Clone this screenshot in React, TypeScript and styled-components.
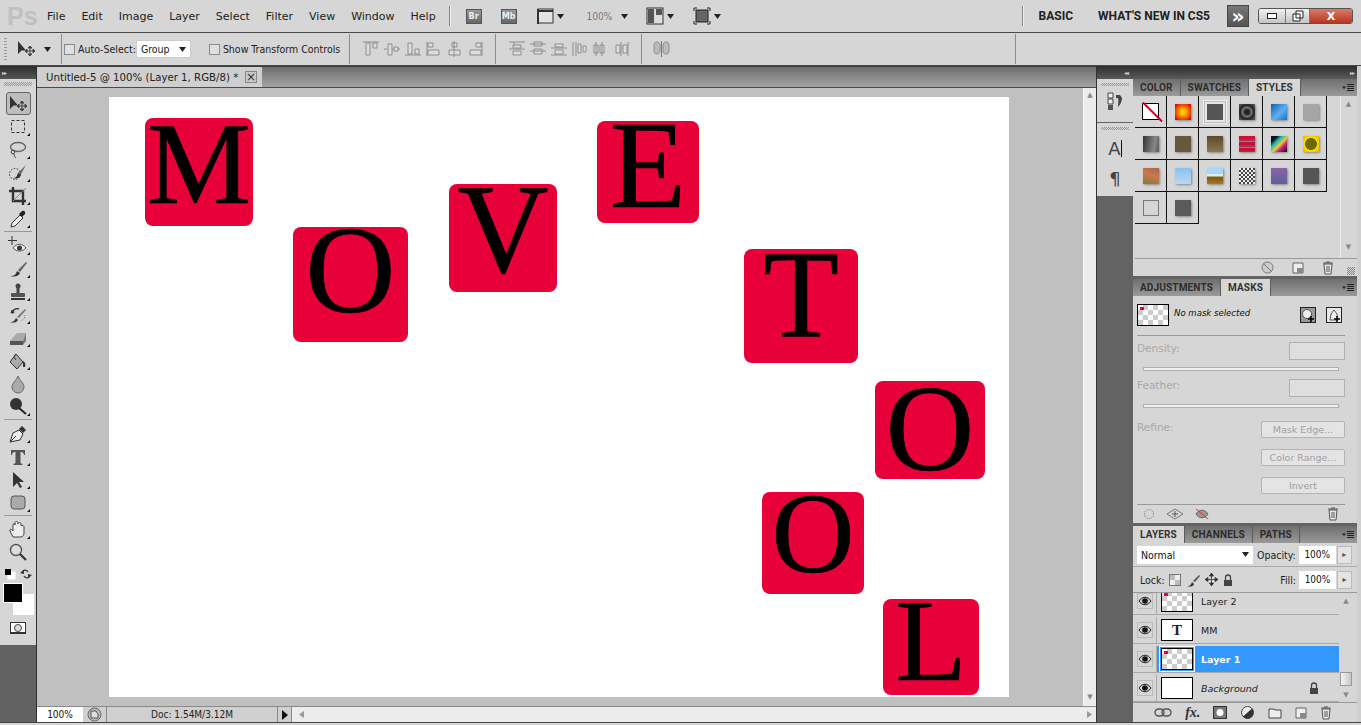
import { ReactNode } from 'react'
import styled, { createGlobalStyle } from 'styled-components'

const GlobalStyle = createGlobalStyle`
  html, body {
    margin: 0;
    height: 100%;
    overflow: hidden;
    background: #d6d6d6;
  }
  * {
    box-sizing: border-box;
  }
`

const ui = '"DejaVu Sans", "Noto Sans", sans-serif'
const narrow = '"DejaVu Sans Condensed", "Noto Sans", sans-serif'
const cond = 'Roboto, "Liberation Sans", sans-serif'

const MENU = ['File', 'Edit', 'Image', 'Layer', 'Select', 'Filter', 'View', 'Window', 'Help']

const TILES = [
  { ch: 'M', x: 36, y: 21, w: 108, h: 108, size: 117, lift: 18 },
  { ch: 'O', x: 184, y: 130, w: 115, h: 115, size: 125, lift: 29 },
  { ch: 'V', x: 340, y: 87, w: 108, h: 108, size: 126, lift: 17 },
  { ch: 'E', x: 488, y: 24, w: 102, h: 102, size: 125, lift: 13 },
  { ch: 'T', x: 635, y: 152, w: 114, h: 114, size: 124, lift: 20 },
  { ch: 'O', x: 766, y: 284, w: 110, h: 98, size: 123, lift: 3 },
  { ch: 'O', x: 653, y: 395, w: 102, h: 102, size: 115, lift: 20 },
  { ch: 'L', x: 774, y: 502, w: 96, h: 96, size: 117, lift: 13 },
]

const STYLES = [
  'none',
  'radial-gradient(circle, #ffe000 10%, #ff6a00 50%, #d01000 90%)',
  '#555',
  'radial-gradient(circle, #222 20%, #777 40%, #222 60%, #555 90%)',
  'linear-gradient(135deg, #0f5fb0, #5fb0ef 55%, #1a6fc8)',
  '#a5a5a5',
  'linear-gradient(100deg, #333, #888 70%, #555)',
  '#66583a',
  'linear-gradient(#5a4a28, #8a7a50)',
  'repeating-linear-gradient(#d0102a 0 3px, #8a3a70 3px 5px, #d8701a 5px 6px)',
  'linear-gradient(135deg, #111 20%, #19b5c8 35%, #e8d030 55%, #d02080 70%, #111)',
  'radial-gradient(circle, #6e6a00 50%, #ffe000 55%, #d8b000)',
  'linear-gradient(20deg, #8a7a30, #c87850 55%, #a86848)',
  'linear-gradient(#8cc0ee, #b8d8f8)',
  'linear-gradient(#a8d8f8 35%, #fff 45%, #7a5a10 60%, #b07a10)',
  'repeating-conic-gradient(#444 0 25%, #eee 0 50%) 0 0 / 4px 4px',
  'linear-gradient(#9060a8, #5a60a0)',
  '#555',
  'transparent',
  '#5a5a5a',
]

const Ico = styled.svg`
  display: block;
  flex: none;
`

function I({ s = 20, w, h, children }: { s?: number; w?: number; h?: number; children: ReactNode }) {
  return (
    <Ico width={w ?? s} height={h ?? s} viewBox={`0 0 ${w ?? s} ${h ?? s}`}>
      {children}
    </Ico>
  )
}

const Caret = () => (
  <I w={7} h={5}>
    <path d="M0 0h7L3.5 5z" fill="#222" />
  </I>
)

const MoveIcon = () => (
  <I s={20}>
    <path d="M2 2v13l3.5-3.5H10z" fill="#333" />
    <path d="M14 7v10M9 12h10M14 7l-2 2h4zM14 17l-2-2h4zM9 12l2-2v4zM19 12l-2-2v4z" stroke="#444" fill="#444" strokeWidth="1" />
  </I>
)

const TOOLS: { key: string; icon: ReactNode; sep?: boolean; corner?: boolean }[] = [
  { key: 'move', icon: <MoveIcon /> },
  { key: 'marquee', corner: true, icon: <I><rect x="3.5" y="3.5" width="13" height="12" fill="none" stroke="#333" strokeDasharray="3 2" /></I> },
  { key: 'lasso', corner: true, icon: <I><ellipse cx="10" cy="7" rx="7.5" ry="4.5" fill="none" stroke="#666" strokeWidth="1.400" /><circle cx="5" cy="12" r="1.800" fill="none" stroke="#444" /><path d="M6 14c0 2 1 3 2 4" stroke="#444" fill="none" /></I> },
  { key: 'quick', corner: true, icon: <I><circle cx="7" cy="11" r="5.500" fill="none" stroke="#333" strokeDasharray="1.500 1.500" /><path d="M18 2l-7 7-1 1 1 2 2-1z" fill="#666" /><path d="M5 15c3 0 4-2 5-5l3 2c-2 4-5 4-8 3z" fill="#333" /></I> },
  { key: 'crop', corner: true, icon: <I><path d="M5 1v14h13M1 5h14v14" fill="none" stroke="#333" strokeWidth="2.400" /><path d="M5 15L18 2" stroke="#888" /></I> },
  { key: 'eye', sep: true, corner: true, icon: <I><path d="M3 18l1-4 8-8 3 3-8 8z" fill="#eee" stroke="#333" /><path d="M11 5l3-3c2-1 4 1 3 3l-3 3z" fill="#222" /></I> },
  { key: 'heal', corner: true, icon: <I><path d="M4 0v9M0 4.500h9" stroke="#333" /><path d="M5 12c4-5 9-5 13 0-4 4-9 4-13 0z" fill="#eee" stroke="#555" /><circle cx="11.500" cy="12" r="2.500" fill="#333" /></I> },
  { key: 'brush', corner: true, icon: <I><path d="M2 17c5 0 6-2 7-5l3 2c-2 4-6 4-10 3z" fill="#333" /><path d="M10 11l8-8 1 1-7 9z" fill="#666" /></I> },
  { key: 'stamp', corner: true, icon: <I><circle cx="10" cy="4" r="2.500" fill="#444" /><path d="M8.500 6h3v5h-3z" fill="#444" /><rect x="3" y="11" width="14" height="4" rx="1" fill="#555" /><rect x="3" y="16" width="14" height="2" fill="#333" /></I> },
  { key: 'history', corner: true, icon: <I><path d="M2 17c4 0 5-2 6-4l2 2c-2 3-5 3-8 2z" fill="#333" /><path d="M9 12l8-8 1 1-7 8z" fill="#777" /><path d="M3 8c2-4 6-5 8-4" stroke="#333" strokeWidth="1.400" fill="none" /><path d="M3 5l1 4 3-2z" fill="#333" /><path d="M17 10c0 3-2 5-4 6" stroke="#777" strokeDasharray="1 1" fill="none" /></I> },
  { key: 'eraser', corner: true, icon: <I><path d="M2 13L9 5h9l-3 9H2z" fill="#aaa" /><path d="M2 13h13v4H2z" fill="#555" /><path d="M15 17l3-4v-8l-3 8z" fill="#777" /></I> },
  { key: 'bucket', corner: true, icon: <I><path d="M8 3L2 11l7 7 6-7z" fill="#aaa" stroke="#333" /><path d="M8 3c-2 1-2 4 0 6" stroke="#333" fill="none" /><path d="M15 10c2 1 3 3 2 6h-2z" fill="#333" /></I> },
  { key: 'drop', icon: <I><path d="M10 2c2 5 6 7 6 11a6 6 0 0 1-12 0c0-4 4-6 6-11z" fill="#aaa" stroke="#666" /></I> },
  { key: 'burn', sep: true, corner: true, icon: <I><circle cx="8" cy="7" r="6" fill="#333" /><path d="M11 11l7 6" stroke="#222" strokeWidth="2" /></I> },
  { key: 'pen', corner: true, icon: <I><path d="M2 18l3-9 6-3 4 4-3 6z" fill="#eee" stroke="#333" /><path d="M11 5l3-3 4 4-3 3z" fill="#333" /><path d="M2 18l6-6" stroke="#333" /></I> },
  { key: 'text', corner: true, icon: <I><path d="M3 3h14v5h-.8c-1-3-2-3-3.700-3v11l2 1v1H5.500v-1l2-1V5c-1.700 0-2.700 0-3.700 3H3z" fill="#555" /></I> },
  { key: 'path', corner: true, icon: <I><path d="M5 2v15l4-4 3 5 2-1-3-5h5z" fill="#333" /></I> },
  { key: 'shape', sep: true, corner: true, icon: <I><rect x="3" y="3" width="14" height="13" rx="3" fill="#aaa" stroke="#555" /></I> },
  { key: 'hand', corner: true, icon: <I><path d="M5 17L2 11c-1-2 1-2 2-1l1 1V5c0-2 2-2 2 0V3c0-2 3-2 3 0v1c0-2 3-2 3 0v2c0-1 3-1 3 1v6c0 2-1 4-3 4z" fill="#eee" stroke="#444" /></I> },
  { key: 'zoom', icon: <I><circle cx="8" cy="7" r="5.500" fill="#ddd" stroke="#555" strokeWidth="1.400" /><path d="M12 11l6 6" stroke="#333" strokeWidth="2.200" /></I> },
]

const ALIGN_A = [
  'M1 1h16M4 2h4v12H4zM11 2h4v5h-4z',
  'M1 8h3M5 3h4v11H5zM9 8h2M11 6h4v4h-4zM15 8h2',
  'M1 14h16M4 2h4v11H4zM11 8h4v5h-4z',
  'M2 1v14M3 2h5v4H3zM3 9h11v5H3z',
  'M8 0v16M6 2h5v4H6zM3 9h11v5H3z',
  'M15 1v14M9 2h5v4H9zM3 9h11v5H3z',
]
const ALIGN_B = [
  'M1 1h16M6 1v4M1 8h16M5 4h8v3H5zM5 10h8v4H5z',
  'M1 3h16M1 10h16M5 1h8v4H5zM5 8h8v5H5z',
  'M1 7h16M1 14h16M5 3h8v3H5zM5 9h8v4H5z',
  'M2 1v14M5 1v14M7 3h3v9H7zM12 5h3v6h-3z',
  'M4 1v14M10 1v14M2 4h4v8H2zM8 4h4v8H8z',
  'M8 1v14M15 1v14M3 4h4v8H3zM10 4h4v8h-4z',
]

const AlignIcon = ({ d }: { d: string }) => (
  <I w={18} h={16}>
    <path d={d} fill="#ddd" stroke="#8c8c8c" />
  </I>
)

const TrashIcon = () => (
  <I w={12} h={14}>
    <path d="M2 3h8l-1 10H3zM1 2h10M4 1h4" fill="#e8e8e8" stroke="#555" />
    <path d="M5 5v6M7 5v6" stroke="#555" />
  </I>
)

const NewIcon = () => (
  <I w={12} h={12}>
    <path d="M1 1h10v10H1z" fill="#eee" stroke="#666" />
    <path d="M5 6h6v5H5z" fill="#888" />
  </I>
)

const FolderIcon = () => (
  <I w={14} h={12}>
    <path d="M1 2h5l1 1h6v8H1z" fill="#eee" stroke="#444" />
  </I>
)

const EyeIcon = () => (
  <I w={14} h={10}>
    <path d="M1 5c3-5 9-5 12 0-3 5-9 5-12 0z" fill="#ccc" stroke="#222" />
    <circle cx="7" cy="5" r="2.800" fill="#111" />
  </I>
)

const LockIcon = () => (
  <I w={10} h={12}>
    <path d="M2.500 6V3.500a2.500 2.500 0 0 1 5 0V6" fill="none" stroke="#444" strokeWidth="1.300" />
    <rect x="1" y="6" width="8" height="6" fill="#444" />
  </I>
)

const MenuGlyph = () => (
  <I w={12} h={8}>
    <path d="M0 2.500h4L2 5z" fill="#222" />
    <path d="M5 .5h7M5 2.500h7M5 4.500h7M5 6.500h7" stroke="#222" />
  </I>
)

export default function App() {
  return (
    <>
      <GlobalStyle />
      <Page>
        <MenuBar>
          <Logo>Ps</Logo>
          {MENU.map((m) => (
            <MenuItem key={m}>{m}</MenuItem>
          ))}
          <VRule $left={5} />
          <AppBtn $left={15}>Br</AppBtn>
          <AppBtn $left={19}>Mb</AppBtn>
          <BarIcon $left={19}>
            <I w={18} h={18}>
              <rect x="2" y="2" width="15" height="14" fill="#e4e4e4" stroke="#333" />
              <path d="M1 3h16v2H1zM1 2h2v15H1z" fill="#333" />
            </I>
            <Caret />
          </BarIcon>
          <ZoomLabel>100%</ZoomLabel>
          <Caret />
          <BarIcon $left={18}>
            <I w={18} h={18}>
              <rect x="1" y="1" width="16" height="16" fill="#ddd" stroke="#333" />
              <path d="M2 2h6v14H2zM10 2h6v6h-6z" fill="#555" />
            </I>
            <Caret />
          </BarIcon>
          <BarIcon $left={19}>
            <I w={18} h={18}>
              <rect x="3" y="3" width="12" height="12" fill="#666" stroke="#222" />
              <path d="M1 4V1h3M14 1h3v3M17 14v3h-3M4 17H1v-3" fill="none" stroke="#222" />
            </I>
            <Caret />
          </BarIcon>
          <Spring />
          <VRule $left={0} />
          <Workspace $left={15}>BASIC</Workspace>
          <Workspace $left={25}>WHAT'S NEW IN CS5</Workspace>
          <MoreBtn>»</MoreBtn>
          <WinControls>
            <WinBtn $w={27}>
              <I w={10} h={6}>
                <rect x="0.500" y="0.500" width="9" height="5" fill="#fff" stroke="#222" />
              </I>
            </WinBtn>
            <WinBtn $w={24}>
              <I w={12} h={12}>
                <path d="M4 1h7v7H4zM1 4h7v7H1z" fill="#fff" stroke="#222" />
              </I>
            </WinBtn>
            <CloseBtn>X</CloseBtn>
          </WinControls>
        </MenuBar>

        <OptionsBar>
          <Grip />
          <OptMove>
            <MoveIcon />
            <Caret />
          </OptMove>
          <OptRule $left={10} />
          <Check $left={2} />
          <OptLabel $left={3}>Auto-Select:</OptLabel>
          <GroupSelect>
            Group
            <Caret />
          </GroupSelect>
          <Check $left={18} />
          <OptLabel $left={3}>Show Transform Controls</OptLabel>
          <OptRule $left={9} />
          <AlignRow $left={12}>
            {ALIGN_A.map((d) => (
              <AlignIcon key={d} d={d} />
            ))}
          </AlignRow>
          <OptRule $left={10} />
          <AlignRow $left={12}>
            {ALIGN_B.map((d) => (
              <AlignIcon key={d} d={d} />
            ))}
          </AlignRow>
          <OptRule $left={10} />
          <AlignRow $left={11}>
            <I w={17} h={16}>
              <path d="M1 4c0-4 6-4 6 0v6c0 4-6 4-6 0zM10 4c0-4 6-4 6 0v6c0 4-6 4-6 0z" fill="#bbb" stroke="#8c8c8c" />
              <path d="M8.500 0v16" stroke="#777" />
            </I>
          </AlignRow>
          <OptRule $left={345} />
        </OptionsBar>

        <Main>
          <ToolColumn>
            <DarkStrip>
              <ArrowMark>▸▸</ArrowMark>
            </DarkStrip>
            <ToolPanel>
              <ToolGrip />
              {TOOLS.map((t, i) => (
                <ToolGroup key={t.key}>
                  <ToolBtn $active={i === 0}>
                    {t.icon}
                    {t.corner && <Corner />}
                  </ToolBtn>
                  {t.sep && <ToolRule />}
                </ToolGroup>
              ))}
              <SwapRow>
                <I w={12} h={12}>
                  <rect x="4" y="4" width="7" height="7" fill="#fff" stroke="#fff" />
                  <rect x="1" y="1" width="6" height="6" fill="#000" />
                </I>
                <I w={12} h={12}>
                  <path d="M2 4c2-3 5-2 6 0M10 8c-2 3-5 2-6 0" fill="none" stroke="#333" strokeWidth="1.300" />
                  <path d="M0 5l4-3v4zM12 7L8 10V6z" fill="#333" />
                </I>
              </SwapRow>
              <Colors>
                <BackColor />
                <ForeColor />
              </Colors>
              <QuickMask>
                <QuickDot />
              </QuickMask>
            </ToolPanel>
          </ToolColumn>

          <DocColumn>
            <TabStrip>
              <DocTab>
                Untitled-5 @ 100% (Layer 1, RGB/8) *
                <TabClose>×</TabClose>
              </DocTab>
            </TabStrip>
            <DocMiddle>
              <Pasteboard>
                <Canvas>
                  {TILES.map((t) => (
                    <Tile key={t.x} $x={t.x} $y={t.y} $w={t.w} $h={t.h} $size={t.size} $lift={t.lift}>
                      {t.ch}
                    </Tile>
                  ))}
                </Canvas>
              </Pasteboard>
              <VScroll>
                <ScrollArrow>▲</ScrollArrow>
                <ScrollArrow>▼</ScrollArrow>
              </VScroll>
            </DocMiddle>
            <StatusBar>
              <ZoomBox>100%</ZoomBox>
              <StatusIcon>
                <I w={15} h={15}>
                  <circle cx="7.500" cy="7.500" r="6.500" fill="#bbb" stroke="#666" />
                  <path d="M4 4h5l2 3v4H4z" fill="#ddd" stroke="#555" />
                </I>
              </StatusIcon>
              <DocInfo>Doc: 1.54M/3.12M</DocInfo>
              <StatusArrow>
                <I w={6} h={10}>
                  <path d="M0 0l6 5-6 5z" fill="#111" />
                </I>
              </StatusArrow>
              <HScroll>
                <I w={5} h={7}>
                  <path d="M5 0v7L0 3.500z" fill="#999" />
                </I>
                <I w={5} h={7}>
                  <path d="M0 0v7l5-3.500z" fill="#999" />
                </I>
              </HScroll>
            </StatusBar>
          </DocColumn>

          <DockArea>
            <DockHeader>
              <ArrowMark>◂◂</ArrowMark>
              <ArrowMark>▸▸</ArrowMark>
            </DockHeader>
            <DockBody>
              <IconDock>
                <IconBox $h={43}>
                  <DockGrip />
                  <I w={16} h={18}>
                    <path d="M1 1h5v5H1zM1 7h5v5H1z" fill="#eee" stroke="#444" />
                    <path d="M1 13h5v5H1z" fill="#555" />
                    <path d="M9 3h4l2 3c0 4-2 7-4 9 0-3 1-6 0-9H9z" fill="#444" />
                  </I>
                </IconBox>
                <IconBox $h={73}>
                  <DockGrip />
                  <DockGlyph>
                    A<Cursor />
                  </DockGlyph>
                  <DockGlyph>¶</DockGlyph>
                </IconBox>
              </IconDock>

              <PanelColumn>
                <Panel $h={197}>
                  <Tabs>
                    <Tab>COLOR</Tab>
                    <Tab>SWATCHES</Tab>
                    <Tab $active>STYLES</Tab>
                    <PanelMenu>
                      <MenuGlyph />
                    </PanelMenu>
                  </Tabs>
                  <StylesBody>
                    <StyleGrid>
                      {STYLES.map((bg, i) => (
                        <StyleCell key={i}>
                          {i === 0 ? (
                            <NoStyle />
                          ) : (
                            <StyleSwatch $bg={bg} $outlined={i === 18} $glow={i === 2} />
                          )}
                        </StyleCell>
                      ))}
                    </StyleGrid>
                    <PanelScroll>
                      <ScrollArrow>▲</ScrollArrow>
                      <ScrollArrow>▼</ScrollArrow>
                    </PanelScroll>
                  </StylesBody>
                  <StylesFooter>
                    <I w={13} h={13}>
                      <circle cx="6.500" cy="6.500" r="5.500" fill="#ccc" stroke="#777" />
                      <path d="M2.500 2.500l8 8" stroke="#777" />
                    </I>
                    <NewIcon />
                    <TrashIcon />
                    <ResizeDots />
                  </StylesFooter>
                </Panel>

                <Panel $h={244}>
                  <Tabs>
                    <Tab>ADJUSTMENTS</Tab>
                    <Tab $active>MASKS</Tab>
                    <PanelMenu>
                      <MenuGlyph />
                    </PanelMenu>
                  </Tabs>
                  <MasksBody>
                    <MaskHead>
                      <Thumb $w={32} $h={22} $checker>
                        <RedSpot />
                      </Thumb>
                      <MaskTitle>No mask selected</MaskTitle>
                      <MaskBtn $dark>
                        <I w={14} h={14}>
                          <circle cx="6" cy="6" r="4.500" fill="#eee" stroke="#555" />
                          <path d="M10 8v6M7 11h6" stroke="#000" strokeWidth="1.500" />
                        </I>
                      </MaskBtn>
                      <MaskBtn>
                        <I w={14} h={14}>
                          <path d="M3 12l1-6 3-4 3 4 1 6z" fill="#eee" stroke="#555" />
                          <path d="M10 8v6M7 11h6" stroke="#000" strokeWidth="1.500" />
                        </I>
                      </MaskBtn>
                    </MaskHead>
                    <FieldRow $top={6}>
                      <Dim>Density:</Dim>
                      <DimInput />
                    </FieldRow>
                    <DimSlider />
                    <FieldRow $top={8}>
                      <Dim>Feather:</Dim>
                      <DimInput />
                    </FieldRow>
                    <DimSlider />
                    <RefineBlock>
                      <Dim>Refine:</Dim>
                      <RefineButtons>
                        <DimButton>Mask Edge...</DimButton>
                        <DimButton>Color Range...</DimButton>
                        <DimButton>Invert</DimButton>
                      </RefineButtons>
                    </RefineBlock>
                    <MasksFooter>
                      <I w={12} h={12}>
                        <circle cx="6" cy="6" r="4.500" fill="none" stroke="#777" strokeDasharray="1 1" />
                      </I>
                      <I w={18} h={12}>
                        <path d="M9 1l8 5-8 5-8-5z" fill="none" stroke="#777" />
                        <path d="M9 3v6M6 6h6" stroke="#555" />
                      </I>
                      <I w={14} h={12}>
                        <path d="M1 6c3-5 9-5 12 0-3 5-9 5-12 0z" fill="#999" stroke="#666" />
                        <path d="M1 1l12 10" stroke="#d33" />
                      </I>
                      <Spring />
                      <TrashIcon />
                    </MasksFooter>
                  </MasksBody>
                </Panel>

                <Panel $h={196}>
                  <Tabs>
                    <Tab $active>LAYERS</Tab>
                    <Tab>CHANNELS</Tab>
                    <Tab>PATHS</Tab>
                    <PanelMenu>
                      <MenuGlyph />
                    </PanelMenu>
                  </Tabs>
                  <BlendRow>
                    <BlendSelect>
                      Normal
                      <Caret />
                    </BlendSelect>
                    <LayerLabel>Opacity:</LayerLabel>
                    <Percent>100%</Percent>
                    <Stepper>▸</Stepper>
                  </BlendRow>
                  <LockRow>
                    <LayerLabel>Lock:</LayerLabel>
                    <LockIcons>
                      <I w={12} h={12}>
                        <rect x="0.500" y="0.500" width="11" height="11" fill="#eee" stroke="#777" />
                        <path d="M1 1h5v5H1zM6 6h5v5H6z" fill="#bbb" />
                      </I>
                      <I w={14} h={14}>
                        <path d="M1 13c4 0 4-2 5-4l2 2c-1 3-4 3-7 2z" fill="#333" />
                        <path d="M7 8l6-6 1 1-5 6z" fill="#555" />
                      </I>
                      <I w={13} h={13}>
                        <path d="M6.500 0v13M0 6.500h13M6.500 0L4.500 3h4zM6.500 13l-2-3h4zM0 6.500l3-2v4zM13 6.500l-3-2v4z" stroke="#333" fill="#333" strokeWidth="0.800" />
                      </I>
                      <LockIcon />
                    </LockIcons>
                    <Spring />
                    <LayerLabel>Fill:</LayerLabel>
                    <Percent>100%</Percent>
                    <Stepper>▸</Stepper>
                  </LockRow>
                  <LayersBody>
                    <LayerList>
                      <LayerRow>
                        <EyeCell>
                          <EyeBox>
                            <EyeIcon />
                          </EyeBox>
                        </EyeCell>
                        <LayerMain>
                          <Thumb $w={32} $h={22} $checker>
                            <RedSpot />
                          </Thumb>
                          <LayerName>Layer 2</LayerName>
                        </LayerMain>
                      </LayerRow>
                      <LayerRow>
                        <EyeCell>
                          <EyeBox>
                            <EyeIcon />
                          </EyeBox>
                        </EyeCell>
                        <LayerMain>
                          <Thumb $w={32} $h={22}>
                            <ThumbT>T</ThumbT>
                          </Thumb>
                          <LayerName>MM</LayerName>
                        </LayerMain>
                      </LayerRow>
                      <LayerRow>
                        <EyeCell>
                          <EyeBox>
                            <EyeIcon />
                          </EyeBox>
                        </EyeCell>
                        <LayerMain $selected>
                          <Thumb $w={32} $h={22} $checker $framed>
                            <RedSpot />
                          </Thumb>
                          <LayerName $selected>Layer 1</LayerName>
                        </LayerMain>
                      </LayerRow>
                      <LayerRow>
                        <EyeCell>
                          <EyeBox>
                            <EyeIcon />
                          </EyeBox>
                        </EyeCell>
                        <LayerMain>
                          <Thumb $w={32} $h={22} />
                          <LayerName $italic>Background</LayerName>
                          <Spring />
                          <BgLock>
                            <LockIcon />
                          </BgLock>
                        </LayerMain>
                      </LayerRow>
                    </LayerList>
                    <LayerScroll>
                      <ScrollArrow>▲</ScrollArrow>
                      <LayerThumb />
                      <ScrollArrow>▼</ScrollArrow>
                    </LayerScroll>
                  </LayersBody>
                  <LayersFooter>
                    <I w={18} h={9}>
                      <rect x="1" y="1" width="9" height="7" rx="3.500" fill="none" stroke="#555" strokeWidth="1.400" />
                      <rect x="8" y="1" width="9" height="7" rx="3.500" fill="none" stroke="#555" strokeWidth="1.400" />
                    </I>
                    <FxMark>fx.</FxMark>
                    <I w={14} h={13}>
                      <rect x="0.500" y="0.500" width="13" height="12" fill="#777" stroke="#333" />
                      <circle cx="7" cy="6.500" r="3.500" fill="#fff" />
                    </I>
                    <I w={14} h={14}>
                      <circle cx="6.500" cy="6.500" r="6" fill="#eee" stroke="#444" />
                      <path d="M11 2.500a6 6 0 0 1-9 8z" fill="#333" />
                    </I>
                    <FolderIcon />
                    <NewIcon />
                    <TrashIcon />
                  </LayersFooter>
                </Panel>
              </PanelColumn>
            </DockBody>
          </DockArea>
          <RightEdge />
        </Main>
        <BottomEdge />
      </Page>
    </>
  )
}

const Page = styled.div`
  width: 1361px;
  height: 725px;
  display: flex;
  flex-direction: column;
  background: #d6d6d6;
  font-family: ${ui};
  font-size: 10px;
  color: #222;
  overflow: hidden;
`
const MenuBar = styled.div`
  height: 32px;
  flex: none;
  display: flex;
  align-items: center;
  padding-left: 7px;
  background: #d6d6d6;
`
const Logo = styled.div`
  width: 32px;
  font-family: 'Liberation Sans', sans-serif;
  font-size: 25px;
  font-weight: 700;
  color: #c0c0c0;
`
const MenuItem = styled.div`
  padding: 0 8px;
  font-size: 11px;
  color: #222;
`
const VRule = styled.div<{ $left: number }>`
  width: 2px;
  height: 20px;
  margin-left: ${(p) => p.$left}px;
  border-left: 1px solid #888;
  border-right: 1px solid #eee;
`
const AppBtn = styled.div<{ $left: number }>`
  width: 16px;
  height: 15px;
  margin-left: ${(p) => p.$left}px;
  display: flex;
  align-items: center;
  justify-content: center;
  font-size: 8px;
  font-weight: 700;
  color: #eee;
  background: linear-gradient(#999, #666);
  border: 1px solid #555;
`
const BarIcon = styled.div<{ $left: number }>`
  display: flex;
  align-items: center;
  gap: 3px;
  margin-left: ${(p) => p.$left}px;
`
const ZoomLabel = styled.div`
  margin: 0 9px 0 23px;
  font-family: ${narrow};
  font-size: 10px;
  color: #777;
`
const Spring = styled.div`
  flex: 1;
`
const Workspace = styled.div<{ $left: number }>`
  margin-left: ${(p) => p.$left}px;
  font-family: ${cond};
  font-size: 12px;
  font-weight: 700;
  color: #222;
`
const MoreBtn = styled.div`
  width: 22px;
  height: 22px;
  margin-left: 17px;
  display: flex;
  align-items: center;
  justify-content: center;
  font-size: 20px;
  line-height: 18px;
  font-weight: 700;
  color: #fff;
  background: linear-gradient(#777, #555);
  border: 1px solid #444;
`
const WinControls = styled.div`
  display: flex;
  margin: 0 8px 0 9px;
  height: 16px;
  border: 1px solid #555;
  border-radius: 3px;
  overflow: hidden;
`
const WinBtn = styled.div<{ $w: number }>`
  width: ${(p) => p.$w}px;
  display: flex;
  align-items: center;
  justify-content: center;
  background: linear-gradient(#f0f0f0, #c4c4c4);
  border-right: 1px solid #777;
`
const CloseBtn = styled.div`
  width: 42px;
  display: flex;
  align-items: center;
  justify-content: center;
  font-size: 11px;
  font-weight: 700;
  color: #fff;
  background: linear-gradient(#d97a68, #b8361f);
`
const OptionsBar = styled.div`
  height: 34px;
  flex: none;
  display: flex;
  align-items: center;
  border-top: 1px solid #4a4a4a;
  border-bottom: 1px solid #4a4a4a;
  background: #d6d6d6;
  padding-left: 4px;
`
const Grip = styled.div`
  width: 3px;
  height: 22px;
  background: repeating-linear-gradient(#999 0 1px, transparent 1px 3px);
`
const OptMove = styled.div`
  display: flex;
  align-items: center;
  gap: 8px;
  margin-left: 9px;
`
const OptRule = styled.div<{ $left: number }>`
  width: 1px;
  height: 30px;
  margin-left: ${(p) => p.$left}px;
  background: #8c8c8c;
`
const Check = styled.div<{ $left: number }>`
  width: 11px;
  height: 11px;
  margin-left: ${(p) => p.$left}px;
  background: #e0e0e0;
  border: 1px solid #8a8a8a;
`
const OptLabel = styled.div<{ $left: number }>`
  margin-left: ${(p) => p.$left}px;
  font-family: ${narrow};
  font-size: 10.500px;
  color: #222;
  white-space: nowrap;
`
const GroupSelect = styled.div`
  width: 55px;
  height: 18px;
  padding: 0 4px;
  display: flex;
  align-items: center;
  justify-content: space-between;
  background: #fff;
  border: 1px solid #ccc;
  font-family: ${narrow};
  font-size: 10.500px;
  color: #222;
`
const AlignRow = styled.div<{ $left: number }>`
  display: flex;
  gap: 3px;
  margin-left: ${(p) => p.$left}px;
`
const Main = styled.div`
  flex: 1;
  min-height: 0;
  display: flex;
`
const ToolColumn = styled.div`
  width: 37px;
  flex: none;
  display: flex;
  flex-direction: column;
  background: #626262;
  border-right: 1px solid #2e2e2e;
`
const DarkStrip = styled.div`
  height: 13px;
  flex: none;
  padding-left: 2px;
  display: flex;
  align-items: center;
  background: linear-gradient(#2e2e2e, #555);
`
const ArrowMark = styled.span`
  font-size: 6px;
  letter-spacing: -1px;
  color: #ccc;
`
const ToolPanel = styled.div`
  height: 566px;
  flex: none;
  display: flex;
  flex-direction: column;
  align-items: center;
  background: #d6d6d6;
  padding-top: 3px;
`
const ToolGrip = styled.div`
  width: 28px;
  height: 4px;
  margin-bottom: 6px;
  background: repeating-conic-gradient(#999 0 25%, transparent 0 50%) 0 0 / 2px 2px;
`
const ToolGroup = styled.div`
  width: 100%;
  display: flex;
  flex-direction: column;
  align-items: center;
`
const ToolBtn = styled.div<{ $active?: boolean }>`
  position: relative;
  width: 25px;
  height: 23px;
  display: flex;
  align-items: center;
  justify-content: center;
  border: 1px solid ${(p) => (p.$active ? '#666' : 'transparent')};
  border-radius: 3px;
  background: ${(p) => (p.$active ? '#bdbdbd' : 'transparent')};
`
const Corner = styled.span`
  position: absolute;
  right: 0;
  bottom: 1px;
  width: 0;
  height: 0;
  border-left: 3px solid transparent;
  border-bottom: 3px solid #111;
`
const ToolRule = styled.div`
  width: 28px;
  height: 1px;
  margin: 1px 0 2px;
  background: #999;
`
const SwapRow = styled.div`
  width: 28px;
  margin-top: 4px;
  display: flex;
  justify-content: space-between;
`
const Colors = styled.div`
  position: relative;
  width: 31px;
  height: 32px;
  margin-top: 3px;
`
const BackColor = styled.div`
  position: absolute;
  right: 0;
  bottom: 0;
  width: 21px;
  height: 21px;
  background: #fff;
`
const ForeColor = styled.div`
  position: absolute;
  left: 0;
  top: 0;
  width: 20px;
  height: 20px;
  background: #000;
  border: 1px solid #fff;
`
const QuickMask = styled.div`
  width: 16px;
  height: 12px;
  margin-top: 7px;
  display: flex;
  align-items: center;
  justify-content: center;
  background: #fff;
  border: 1px solid #333;
  border-bottom-width: 2px;
`
const QuickDot = styled.div`
  width: 8px;
  height: 8px;
  border-radius: 50%;
  background: #ddd;
  border: 1px solid #444;
`
const DocColumn = styled.div`
  width: 1059px;
  flex: none;
  display: flex;
  flex-direction: column;
`
const TabStrip = styled.div`
  height: 22px;
  flex: none;
  display: flex;
  align-items: flex-end;
  background: linear-gradient(#6f6f6f, #a3a3a3);
  border-top: 1px solid #3a3a3a;
  border-bottom: 1px solid #4a4a4a;
`
const DocTab = styled.div`
  width: 225px;
  height: 20px;
  display: flex;
  align-items: center;
  justify-content: space-between;
  padding: 0 5px 0 9px;
  font-size: 10.200px;
  color: #222;
  background: #cfcfcf;
  white-space: nowrap;
`
const TabClose = styled.span`
  width: 12px;
  height: 12px;
  display: flex;
  align-items: center;
  justify-content: center;
  font-size: 12px;
  line-height: 10px;
  color: #333;
  border: 1px solid #888;
  background: #c8c8c8;
`
const DocMiddle = styled.div`
  flex: 1;
  min-height: 0;
  display: flex;
`
const Pasteboard = styled.div`
  flex: 1;
  padding: 9px 0 0 72px;
  background: #c0c0c0;
`
const Canvas = styled.div`
  position: relative;
  width: 900px;
  height: 600px;
  background: #fff;
`
const Tile = styled.div<{ $x: number; $y: number; $w: number; $h: number; $size: number; $lift: number }>`
  position: absolute;
  left: ${(p) => p.$x}px;
  top: ${(p) => p.$y}px;
  width: ${(p) => p.$w}px;
  height: ${(p) => p.$h}px;
  padding-bottom: ${(p) => p.$lift}px;
  display: flex;
  align-items: center;
  justify-content: center;
  font-family: 'Liberation Serif', serif;
  font-size: ${(p) => p.$size}px;
  line-height: 1;
  color: #000;
  -webkit-text-stroke: 0.7px #000;
  background: #e80038;
  border-radius: 8px;
`
const VScroll = styled.div`
  width: 13px;
  flex: none;
  display: flex;
  flex-direction: column;
  justify-content: space-between;
  align-items: center;
  padding: 3px 0 4px;
  background: #ececec;
  border-left: 1px solid #fafafa;
`
const ScrollArrow = styled.span`
  font-size: 7px;
  line-height: 9px;
  color: #888;
`
const StatusBar = styled.div`
  height: 16px;
  flex: none;
  display: flex;
  background: #d0d0d0;
  border-top: 1px solid #8a8a8a;
`
const ZoomBox = styled.div`
  width: 46px;
  display: flex;
  align-items: center;
  justify-content: center;
  font-family: ${narrow};
  font-size: 10px;
  background: #fff;
  color: #111;
`
const StatusIcon = styled.div`
  width: 24px;
  display: flex;
  align-items: center;
  justify-content: center;
  border-right: 1px solid #8a8a8a;
`
const DocInfo = styled.div`
  width: 171px;
  display: flex;
  align-items: center;
  justify-content: center;
  font-family: ${narrow};
  font-size: 10px;
  border-right: 1px solid #8a8a8a;
`
const StatusArrow = styled.div`
  width: 14px;
  display: flex;
  align-items: center;
  justify-content: center;
  border-right: 1px solid #8a8a8a;
`
const HScroll = styled.div`
  flex: 1;
  display: flex;
  align-items: center;
  justify-content: space-between;
  padding: 0 4px 0 7px;
  background: #ececec;
`
const DockArea = styled.div`
  width: 261px;
  flex: none;
  display: flex;
  flex-direction: column;
  background: #636363;
  border-left: 1px solid #333;
`
const DockHeader = styled.div`
  height: 13px;
  flex: none;
  display: flex;
  align-items: center;
  justify-content: space-between;
  padding: 0 3px 0 27px;
  background: linear-gradient(#2e2e2e, #5a5a5a);
`
const DockBody = styled.div`
  flex: 1;
  min-height: 0;
  display: flex;
`
const IconDock = styled.div`
  width: 36px;
  flex: none;
  display: flex;
  flex-direction: column;
  gap: 1px;
`
const IconBox = styled.div<{ $h: number }>`
  height: ${(p) => p.$h}px;
  display: flex;
  flex-direction: column;
  align-items: center;
  gap: 6px;
  padding-top: 4px;
  background: #d6d6d6;
`
const DockGrip = styled.div`
  width: 28px;
  height: 3px;
  background: repeating-conic-gradient(#999 0 25%, transparent 0 50%) 0 0 / 2px 2px;
`
const DockGlyph = styled.div`
  height: 24px;
  display: flex;
  align-items: center;
  font-size: 18px;
  color: #444;
`
const Cursor = styled.span`
  width: 1px;
  height: 17px;
  background: #111;
`
const PanelColumn = styled.div`
  width: 224px;
  flex: none;
  display: flex;
  flex-direction: column;
  gap: 3px;
`
const Panel = styled.div<{ $h: number }>`
  height: ${(p) => p.$h}px;
  flex: none;
  display: flex;
  flex-direction: column;
  background: #d6d6d6;
`
const Tabs = styled.div`
  height: 17px;
  flex: none;
  display: flex;
  background: linear-gradient(#6f6f6f, #9a9a9a);
`
const Tab = styled.div<{ $active?: boolean }>`
  padding: 0 7px;
  display: flex;
  align-items: center;
  font-family: ${cond};
  font-size: 10px;
  font-weight: 700;
  letter-spacing: 0.150px;
  color: ${(p) => (p.$active ? '#333' : '#2c2c2c')};
  background: ${(p) => (p.$active ? '#d6d6d6' : 'transparent')};
  border-right: 1px solid #5c5c5c;
`
const PanelMenu = styled.div`
  margin-left: auto;
  padding-right: 3px;
  display: flex;
  align-items: center;
`
const StylesBody = styled.div`
  flex: 1;
  min-height: 0;
  display: flex;
  padding-left: 2px;
`
const StyleGrid = styled.div`
  width: 205px;
  display: grid;
  grid-template-columns: repeat(6, 32px);
  grid-auto-rows: 32px;
  align-content: start;
`
const StyleCell = styled.div`
  display: flex;
  align-items: center;
  justify-content: center;
  border-right: 1px solid #111;
  border-bottom: 1px solid #111;
`
const StyleSwatch = styled.div<{ $bg: string; $outlined: boolean; $glow: boolean }>`
  width: 16px;
  height: 16px;
  background: ${(p) => p.$bg};
  border: ${(p) => (p.$outlined ? '1px solid #777' : 'none')};
  box-shadow: ${(p) =>
    p.$glow ? '0 0 0 2px #e8e8e0, 0 0 0 3px #bbb, 0 0 0 4px #eee' : p.$outlined ? 'none' : '1px 1px 2px #888'};
`
const NoStyle = styled.div`
  position: relative;
  width: 17px;
  height: 17px;
  background: #fff;
  border: 1px solid #000;
  &::after {
    content: '';
    position: absolute;
    left: -4px;
    top: 7px;
    width: 27px;
    height: 2px;
    background: #d00020;
    transform: rotate(45deg);
  }
`
const PanelScroll = styled.div`
  width: 16px;
  margin-left: auto;
  margin-right: 1px;
  display: flex;
  flex-direction: column;
  align-items: center;
  justify-content: space-between;
  padding: 4px 0 6px;
  background: #d6d6d6;
  border-left: 1px solid #ececec;
`
const StylesFooter = styled.div`
  height: 18px;
  flex: none;
  display: flex;
  align-items: center;
  justify-content: flex-end;
  gap: 18px;
  padding-right: 2px;
  border-top: 1px solid #999;
  margin: 0 0 0 2px;
`
const ResizeDots = styled.div`
  width: 8px;
  height: 8px;
  margin: 6px 0 0 -5px;
  background: repeating-conic-gradient(#888 0 25%, transparent 0 50%) 0 0 / 2px 2px;
`
const MasksBody = styled.div`
  flex: 1;
  min-height: 0;
  display: flex;
  flex-direction: column;
  padding: 8px 12px 0 4px;
`
const MaskHead = styled.div`
  height: 32px;
  flex: none;
  display: flex;
  align-items: flex-start;
  padding-right: 3px;
  border-bottom: 1px solid #999;
`
const Thumb = styled.div<{ $w: number; $h: number; $checker?: boolean; $framed?: boolean }>`
  position: relative;
  width: ${(p) => p.$w}px;
  height: ${(p) => p.$h}px;
  flex: none;
  display: flex;
  align-items: center;
  justify-content: center;
  background: ${(p) =>
    p.$checker ? 'repeating-conic-gradient(#ccc 0 25%, #fff 0 50%) 0 0 / 10px 10px' : '#fff'};
  border: 1px solid #000;
  outline: ${(p) => (p.$framed ? '1px solid #fff' : 'none')};
  outline-offset: 1px;
`
const RedSpot = styled.span`
  position: absolute;
  left: 2px;
  top: 2px;
  width: 4px;
  height: 3px;
  background: #e80038;
`
const MaskTitle = styled.div`
  flex: 1;
  margin: 3px 0 0 5px;
  font-family: ${narrow};
  font-size: 9.500px;
  font-style: italic;
  color: #111;
  white-space: nowrap;
`
const MaskBtn = styled.div<{ $dark?: boolean }>`
  width: 16px;
  height: 16px;
  margin: 3px 0 0 10px;
  display: flex;
  align-items: center;
  justify-content: center;
  background: ${(p) => (p.$dark ? '#9a9a9a' : '#e8e8e8')};
  border: 1px solid #222;
`
const FieldRow = styled.div<{ $top: number }>`
  height: 18px;
  margin-top: ${(p) => p.$top}px;
  flex: none;
  display: flex;
  align-items: flex-start;
  justify-content: space-between;
`
const Dim = styled.div`
  font-size: 10.500px;
  color: #a8a8a8;
`
const DimInput = styled.div`
  width: 56px;
  height: 18px;
  background: #dedede;
  border: 1px solid #b0b0b0;
`
const DimSlider = styled.div`
  height: 4px;
  flex: none;
  margin: 7px 6px 0;
  background: #f0f0f0;
  border: 1px solid #b0b0b0;
`
const RefineBlock = styled.div`
  margin-top: 13px;
  flex: none;
  display: flex;
  justify-content: space-between;
`
const RefineButtons = styled.div`
  width: 84px;
  display: flex;
  flex-direction: column;
  gap: 11px;
`
const DimButton = styled.div`
  height: 17px;
  display: flex;
  align-items: center;
  justify-content: center;
  font-size: 9.500px;
  color: #a0a0a0;
  background: #e4e4e4;
  border: 1px solid #b4b4b4;
  border-radius: 2px;
  white-space: nowrap;
`
const MasksFooter = styled.div`
  height: 18px;
  margin-top: 10px;
  flex: none;
  display: flex;
  align-items: center;
  gap: 11px;
  padding: 0 6px 0 6px;
  border-top: 1px solid #999;
`
const BlendRow = styled.div`
  height: 24px;
  flex: none;
  display: flex;
  align-items: center;
  padding: 0 5px 0 4px;
  border-bottom: 1px solid #aaa;
`
const BlendSelect = styled.div`
  width: 116px;
  height: 18px;
  margin-right: 4px;
  padding: 0 4px;
  display: flex;
  align-items: center;
  justify-content: space-between;
  background: #fff;
  font-family: ${narrow};
  font-size: 10.500px;
  color: #111;
`
const LayerLabel = styled.div`
  font-family: ${narrow};
  font-size: 10.500px;
  color: #222;
`
const Percent = styled.div`
  width: 37px;
  height: 18px;
  margin-left: 3px;
  display: flex;
  align-items: center;
  justify-content: center;
  font-family: ${narrow};
  font-size: 10px;
  background: #fff;
  color: #111;
`
const Stepper = styled.div`
  width: 15px;
  height: 18px;
  margin-left: 1px;
  display: flex;
  align-items: center;
  justify-content: center;
  font-size: 8px;
  color: #555;
  background: #e4e4e4;
  border: 1px solid #bbb;
`
const LockRow = styled.div`
  height: 26px;
  flex: none;
  display: flex;
  align-items: center;
  padding: 0 5px 0 7px;
  border-bottom: 1px solid #999;
`
const LockIcons = styled.div`
  display: flex;
  align-items: center;
  gap: 5px;
  margin-left: 4px;
`
const LayersBody = styled.div`
  flex: 1;
  min-height: 0;
  display: flex;
`
const LayerList = styled.div`
  width: 206px;
  flex: none;
  display: flex;
  flex-direction: column;
  justify-content: flex-end;
  overflow: hidden;
`
const LayerRow = styled.div`
  height: 29px;
  flex: none;
  display: flex;
  padding-top: 2px;
  border-bottom: 1px solid #aaa;
`
const EyeCell = styled.div`
  width: 24px;
  flex: none;
  display: flex;
  align-items: center;
  justify-content: center;
  border-right: 1px solid #aaa;
`
const EyeBox = styled.div`
  width: 16px;
  height: 16px;
  display: flex;
  align-items: center;
  justify-content: center;
  border: 1px solid #bbb;
`
const LayerMain = styled.div<{ $selected?: boolean }>`
  flex: 1;
  display: flex;
  align-items: center;
  padding-left: 4px;
  background: ${(p) => (p.$selected ? '#3399ff' : 'transparent')};
`
const LayerName = styled.div<{ $selected?: boolean; $italic?: boolean }>`
  margin-left: 8px;
  font-size: 9.500px;
  font-weight: ${(p) => (p.$selected ? 700 : 400)};
  font-style: ${(p) => (p.$italic ? 'italic' : 'normal')};
  color: ${(p) => (p.$selected ? '#fff' : '#222')};
`
const ThumbT = styled.span`
  font-family: 'Liberation Serif', serif;
  font-size: 15px;
  font-weight: 700;
  color: #222;
`
const BgLock = styled.div`
  margin-right: 20px;
`
const LayerScroll = styled.div`
  width: 14px;
  flex: none;
  display: flex;
  flex-direction: column;
  align-items: center;
  padding: 4px 0 2px;
  background: #d6d6d6;
  justify-content: space-between;
`
const LayerThumb = styled.div`
  width: 12px;
  height: 14px;
  margin: auto 0 5px;
  background: linear-gradient(90deg, #f4f4f4, #c8c8c8);
  border: 1px solid #999;
`
const LayersFooter = styled.div`
  height: 20px;
  flex: none;
  display: flex;
  align-items: center;
  justify-content: space-between;
  padding: 0 25px 0 21px;
  border-top: 1px solid #999;
`
const FxMark = styled.span`
  font-family: 'Liberation Serif', serif;
  font-size: 14px;
  font-weight: 700;
  font-style: italic;
  color: #333;
`
const RightEdge = styled.div`
  flex: 1;
  background: #cfcfcf;
`
const BottomEdge = styled.div`
  height: 3px;
  flex: none;
  background: #d6d6d6;
  border-top: 1px solid #444;
`
